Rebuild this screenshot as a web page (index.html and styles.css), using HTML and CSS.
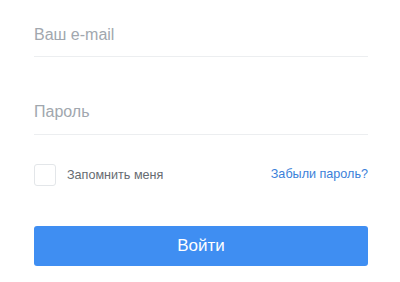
FILE: index.html
```html
<!DOCTYPE html>
<html lang="ru">
<head>
<meta charset="utf-8">
<link rel="stylesheet" href="styles.css">
</head>
<body>
<form class="login">
  <div class="field field-first"><input class="input" type="email" placeholder="Ваш e-mail"></div>
  <div class="field field-second"><input class="input" type="password" placeholder="Пароль"></div>
  <div class="options">
    <label class="remember"><span class="box"></span><span class="remember-text">Запомнить меня</span></label>
    <a class="forgot" href="#">Забыли пароль?</a>
  </div>
  <button class="submit" type="button">Войти</button>
</form>
</body>
</html>
```
FILE: styles.css
```css
html, body {
  margin: 0;
  padding: 0;
  background: #ffffff;
}
body {
  font-family: "Liberation Sans", Arial, sans-serif;
}
.login {
  width: 334px;
  padding: 0 32px 0 34px;
  display: flex;
  flex-direction: column;
}
.field {
  border-bottom: 1px solid #eceef0;
}
.field-first {
  padding: 25px 0 11px;
}
.field-second {
  padding: 45px 0 12px;
}
.input {
  display: block;
  width: 100%;
  border: 0;
  outline: 0;
  padding: 0;
  margin: 0;
  height: 20px;
  line-height: 20px;
  font-family: inherit;
  font-size: 16px;
  color: #333;
  background: transparent;
}
.input::placeholder {
  color: #a1a7ae;
  opacity: 1;
}
.options {
  display: flex;
  align-items: center;
  justify-content: space-between;
  margin-top: 29px;
  height: 22px;
}
.remember {
  display: flex;
  align-items: center;
  gap: 11px;
}
.box {
  width: 20px;
  height: 20px;
  border: 1px solid #e3e6e9;
  border-radius: 3px;
  background: #fff;
}
.remember-text {
  font-size: 12.6px;
  color: #666b71;
}
.forgot {
  font-size: 12.6px;
  color: #3b7fd9;
  text-decoration: none;
  margin-top: -2px;
}
.submit {
  margin-top: 40px;
  height: 40px;
  border: 0;
  border-radius: 3px;
  background: #3f8ef2;
  color: #ffffff;
  font-family: inherit;
  font-size: 17px;
  padding: 0;
}
```
